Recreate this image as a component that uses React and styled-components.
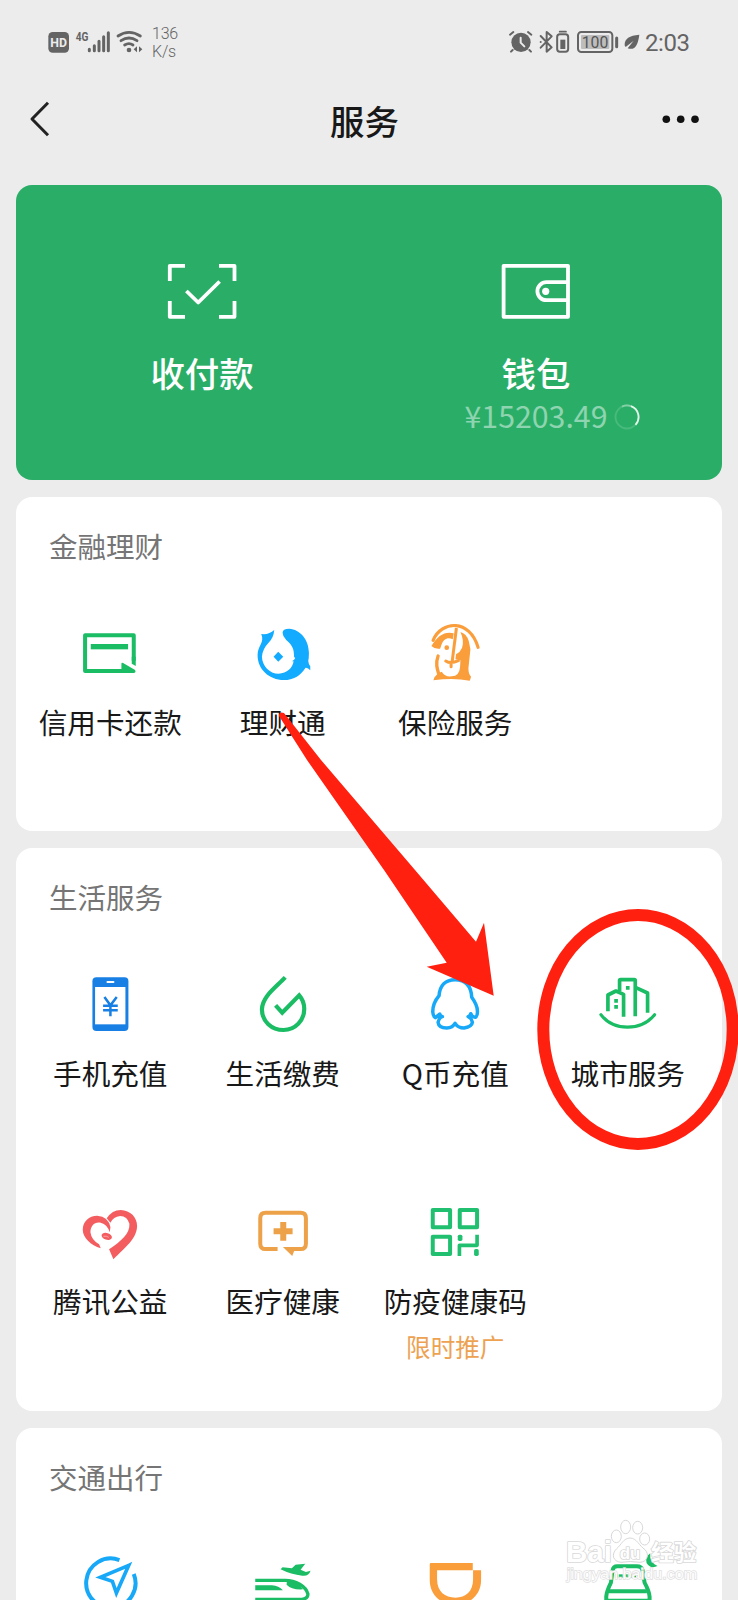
import React from "react";
import styled, { createGlobalStyle } from "styled-components";

const GlobalStyle = createGlobalStyle`
  *, *::before, *::after { box-sizing: border-box; }
  body {
    margin: 0;
    background: #ececec;
    font-family: "Noto Sans CJK SC", "Noto Sans", sans-serif;
  }
`;

const GREEN = "#1abc64";
const BLUE = "#18a8f8";
const ORANGE = "#fa9d3b";
const STATUS = "#646464";

const Screen = styled.div`
  position: relative;
  width: 738px;
  height: 1600px;
  overflow: hidden;
  background: #ececec;
  color: #181818;
`;

const StatusBar = styled.div`
  display: flex;
  align-items: center;
  height: 84px;
  padding: 0 48px;
  color: ${STATUS};
`;

const StatusIcon = styled.svg`
  display: block;
  flex: none;
  width: ${(p) => p.$w}px;
  height: 24px;
  margin-left: ${(p) => p.$gap || 0}px;
  overflow: visible;
`;

const NetSpeed = styled.div`
  margin: 2px 0 0 9px;
  font: 300 16px/18.5px Roboto, sans-serif;
  letter-spacing: -0.2px;
`;

const StatusRight = styled.div`
  display: flex;
  align-items: center;
  margin-left: auto;
`;

const Clock = styled.span`
  width: 45px;
  margin: 2px 0 0 5px;
  font: 400 24px/28px Roboto, sans-serif;
  letter-spacing: -0.4px;
  white-space: nowrap;
`;

const NavBar = styled.header`
  display: flex;
  align-items: center;
  justify-content: space-between;
  height: 69px;
  padding: 0 38px 0 29px;
`;

const NavIcon = styled.svg`
  display: block;
  width: ${(p) => p.$w}px;
  height: 36px;
`;

const PageTitle = styled.h1`
  margin: 2px 0 0 17px;
  font-size: 34.4px;
  line-height: 50px;
  font-weight: 500;
`;

const Cards = styled.main`
  display: flex;
  flex-direction: column;
  gap: 17px;
  padding: 32px 16px 0;
`;

const PayCard = styled.section`
  display: flex;
  height: 295px;
  padding: 66px 19px 0;
  border-radius: 16px;
  background: #2aae67;
  color: #fff;
`;

const PayItem = styled.div`
  flex: 1;
  display: flex;
  flex-direction: column;
  align-items: center;
`;

const PayIcon = styled.svg`
  display: block;
  width: 80px;
  height: 80px;
`;

const PayLabel = styled.div`
  margin-top: 15px;
  font-size: 34.4px;
  line-height: 52px;
  font-weight: 500;
`;

const BalanceRow = styled.div`
  display: flex;
  align-items: center;
  justify-content: center;
  height: 35px;
`;

const Balance = styled.span`
  flex: none;
  width: 140px;
  display: flex;
  justify-content: center;
  font-size: 30px;
  line-height: 35px;
  font-weight: 400;
  color: #8fd4b0;
  transform: scaleX(1.01);
`;

const Spinner = styled.svg`
  flex: none;
  width: 26px;
  height: 26px;
  margin: 3px -34px 0 8px;
`;

const Card = styled.section`
  padding: 29px 8px ${(p) => p.$bottom || 37}px;
  border-radius: 16px;
  background: #fff;
`;

const CardTitle = styled.h2`
  margin: 0 0 0 25px;
  font-size: 28.5px;
  line-height: 40px;
  font-weight: 400;
  color: #757575;
`;

const Grid = styled.div`
  display: grid;
  grid-template-columns: repeat(4, 1fr);
  grid-auto-rows: 228px;
`;

const Service = styled.div`
  display: flex;
  flex-direction: column;
  align-items: center;
  padding-top: 57px;
  white-space: nowrap;
`;

const ServiceIcon = styled.svg`
  display: block;
  flex: none;
  width: 60px;
  height: 60px;
  overflow: visible;
`;

const ServiceLabel = styled.div`
  margin-top: 19px;
  font-size: 28.6px;
  line-height: 40px;
`;

const Caption = styled.div`
  margin-top: 8px;
  font-size: 24.6px;
  line-height: 34px;
  color: #eda252;
`;

const Annotation = styled.svg`
  position: absolute;
  left: 0;
  top: 0;
  width: 738px;
  height: 1600px;
  pointer-events: none;
`;

const Watermark = styled.svg`
  position: absolute;
  left: 550px;
  top: 1510px;
  width: 160px;
  height: 90px;
  pointer-events: none;
`;

/* ---------- status bar icons ---------- */

const HdBadge = () => (
  <StatusIcon $w={21} viewBox="144 90 63 72">
    <rect x="145" y="96" width="62" height="62" rx="13" fill={STATUS} />
    <text x="176" y="142" textAnchor="middle" textLength="50" lengthAdjust="spacingAndGlyphs" fontFamily="Roboto" fontWeight="700" fontSize="41" fill="#ececec">HD</text>
  </StatusIcon>
);

const Signal = () => (
  <StatusIcon $w={34} $gap={7} viewBox="228 90 102 72">
    <text x="227" y="122" textLength="38" lengthAdjust="spacingAndGlyphs" fontFamily="Roboto" fontWeight="700" fontSize="39" fill={STATUS}>4G</text>
    <g stroke={STATUS} strokeWidth="9" strokeLinecap="round">
      <path d="M268 148V152M283 137V152M297 124V152M311 110V152M325 98V152" />
    </g>
  </StatusIcon>
);

const Wifi = () => (
  <StatusIcon $w={27} $gap={6} viewBox="348 90 81 72">
    <g fill="none" stroke={STATUS} strokeWidth="8.5" strokeLinecap="round">
      <path d="M354 108Q387 86 421 108M363 122Q387 106 411 122M374 135Q387 127 399 135" />
    </g>
    <circle cx="387" cy="150" r="7" fill={STATUS} />
    <path d="M401 148L411 139V157ZM427 148L417 139V157Z" fill={STATUS} />
  </StatusIcon>
);

const Alarm = () => (
  <StatusIcon $w={24} viewBox="27 30 72 72">
    <circle cx="63" cy="67" r="29" fill={STATUS} />
    <path d="M30 44L40 36M94 44L84 36M38 90L33 95M88 90L93 95" stroke={STATUS} strokeWidth="6" strokeLinecap="round" />
    <path d="M62 53V68L73 79" stroke="#ececec" strokeWidth="6" fill="none" strokeLinecap="round" />
  </StatusIcon>
);

const Bluetooth = () => (
  <StatusIcon $w={14} $gap={6} viewBox="117 30 42 72">
    <path d="M122 48L155 82L140 95V36L155 49L122 83" fill="none" stroke={STATUS} strokeWidth="6" strokeLinejoin="round" strokeLinecap="round" />
    <circle cx="122" cy="66" r="3" fill={STATUS} />
  </StatusIcon>
);

const DeviceBattery = () => (
  <StatusIcon $w={13} $gap={3} viewBox="168 30 39 72">
    <path d="M179 35H198" stroke={STATUS} strokeWidth="5" strokeLinecap="round" />
    <rect x="171.500" y="43" width="33" height="52" rx="8" fill="none" stroke={STATUS} strokeWidth="6" />
    <rect x="181" y="59" width="15" height="28" fill={STATUS} />
  </StatusIcon>
);

const Battery = () => (
  <StatusIcon $w={42} $gap={8} viewBox="231 30 126 72">
    <rect x="234" y="36" width="103" height="60" rx="10" fill="none" stroke={STATUS} strokeWidth="6" />
    <rect x="243" y="45" width="85" height="42" rx="3" fill="#bdbdbd" />
    <path d="M350 54V80" stroke={STATUS} strokeWidth="9" strokeLinecap="round" />
    <text x="285" y="83" textAnchor="middle" textLength="80" lengthAdjust="spacingAndGlyphs" fontFamily="Roboto" fontSize="50" fill="#555">100</text>
  </StatusIcon>
);

const Leaf = () => (
  <StatusIcon $w={16} $gap={5} viewBox="372 30 48 72">
    <path d="M418 44C388 46 374 56 374 74C374 78 376 80 378 80L401 62L383 85C406 92 414 74 418 44Z" fill={STATUS} />
  </StatusIcon>
);

/* ---------- service icons ---------- */

const CreditCard = () => (
  <ServiceIcon viewBox="150.75 369 180 180">
    <path d="M312 482V406H166V513H280" fill="none" stroke={GREEN} strokeWidth="12" strokeLinejoin="round" />
    <path d="M306 470H318V498L306 491Z" fill={GREEN} />
    <rect x="183" y="432" width="112" height="16" fill={GREEN} />
    <path d="M275 519V491Q275 486 280 489L316 510Q320 519 311 519Z" fill={GREEN} />
  </ServiceIcon>
);

const Fish = () => (
  <ServiceIcon viewBox="668.25 369 180 180">
    <path d="M693 402Q716 405 732 390Q730 414 715 428Q697 446 695 470C696 498 718 521 745 521C770 521 788 503 790 484L785 484Q793 480 795 474Q790 472 791 462C791 444 782 432 768 420Q757 409 757 398Q757 386 777 386C809 388 836 418 836 459Q836 475 834 482Q835 494 840 499V511Q833 502 826 503C811 527 789 540 761 540C716 540 682 508 682 465C682 437 704 428 693 402Z" fill="#12abff" />
    <path d="M744 455L759 470L744 485L730 470Z" fill="#12abff" />
  </ServiceIcon>
);

const Penguin = () => (
  <ServiceIcon viewBox="1185.75 369 180 180">
    <g fill="none" stroke={ORANGE}>
      <path d="M1210 421C1236 361 1320 356 1345 442" strokeWidth="9.500" strokeLinecap="round" />
      <path d="M1280 384L1267 487" strokeWidth="9" />
      <path d="M1225 468C1217 490 1222 506 1227 522" strokeWidth="10" strokeLinecap="round" />
      <path d="M1248 483Q1263 493 1286 482M1264 487V500" strokeWidth="9" strokeLinecap="round" />
    </g>
    <path d="M1205 438C1224 406 1246 393 1272 400L1269 418C1253 409 1241 419 1236 432L1231 446Q1215 448 1205 438Z" fill={ORANGE} />
    <circle cx="1251" cy="443" r="7" fill={ORANGE} />
    <path d="M1292 396Q1310 401 1317 423L1322 448L1316 505Q1316 524 1324 530L1320 542Q1270 532 1211 541L1214 532L1225 520L1236 515Q1246 532 1266 529Q1289 528 1291 500L1292 481L1277 478L1279 463Q1291 457 1297 443Q1304 422 1292 396Z" fill={ORANGE} />
  </ServiceIcon>
);

const Phone = () => (
  <ServiceIcon viewBox="150.75 312 180 180">
    <rect x="188" y="322" width="108" height="161" rx="12" fill="#1880e4" />
    <rect x="196" y="351" width="91" height="112" fill="#fff" />
    <path d="M233 336H251" stroke="#fff" strokeWidth="6" strokeLinecap="round" />
    <path d="M224 381L242 406L261 381M242 406V439M220 407H264M220 421H264" fill="none" stroke="#1880e4" strokeWidth="7.500" />
  </ServiceIcon>
);

const Drop = () => (
  <ServiceIcon viewBox="668.25 312 180 180">
    <path d="M765 322C737 352 696 379 695 418C695 454 724 480 760 480C796 480 822 450 822 417Q822 393 807 376L756 428L736 406" fill="none" stroke={GREEN} strokeWidth="12.500" />
  </ServiceIcon>
);

const QqPenguin = () => (
  <ServiceIcon viewBox="1185.75 312 180 180">
    <path d="M1276 329C1246 329 1230 348 1228 377C1217 390 1209 407 1209 425Q1210 440 1217 443L1230 432Q1231 438 1238 440Q1227 443 1225 457Q1227 474 1251 474Q1269 474 1276 460Q1285 474 1303 474Q1326 471 1328 457Q1326 444 1315 440Q1321 438 1323 431Q1328 443 1337 442Q1344 437 1343 423Q1343 406 1326 382C1324 347 1307 329 1276 329Z" fill="none" stroke={BLUE} strokeWidth="10.500" strokeLinejoin="round" />
  </ServiceIcon>
);

const City = () => (
  <ServiceIcon viewBox="653.25 282 180 180">
    <g fill="none" stroke={GREEN} strokeWidth="11" strokeLinejoin="round">
      <path d="M730 410V343L707 333L683 345V394" />
      <path d="M718 333V301Q718 299 721 299H762Q765 299 765 302V409" />
      <path d="M767 323L802 339V398" />
      <path d="M662 404C700 454 783 454 823 404" strokeWidth="9.500" strokeLinecap="round" />
    </g>
    <path d="M702 357h11v11h-11zM702 375h11v11h-11zM737 318h11v11h-11z" fill={GREEN} />
  </ServiceIcon>
);

const Heart = () => (
  <ServiceIcon viewBox="150.75 36 180 180">
    <path d="M213 175C183 165 159 143 159 119C159 94 178 77 202 77Q237 80 242 112L240 127Q233 103 213 98C195 94 182 107 182 127Q185 150 208 163Z" fill="#f35d60" />
    <path d="M231 85Q247 60 273 60C302 61 322 82 322 108C321 147 287 171 251 208L238 178C275 152 301 131 299 101Q293 79 271 78Q251 80 242 98Z" fill="#f35d60" />
    <ellipse cx="231" cy="139" rx="16" ry="10" transform="rotate(18 231 139)" fill="#f35d60" />
    <path d="M221 139Q230 137 237 142" fill="none" stroke="#fbc4c5" strokeWidth="2" />
  </ServiceIcon>
);

const Medical = () => (
  <ServiceIcon viewBox="668.25 36 180 180">
    <path d="M742 177H706Q690 177 690 161V84Q690 68 706 68H811Q827 68 827 84V161Q827 177 811 177H790" fill="none" stroke="#eda24a" strokeWidth="12" />
    <path d="M758 171H796L786 198Z" fill="#eda24a" />
    <path d="M759 96V152M730 124H787" stroke="#eda24a" strokeWidth="18" />
  </ServiceIcon>
);

const HealthCode = () => (
  <ServiceIcon viewBox="1185.75 36 180 180">
    <g fill="none" stroke="#20c070" strokeWidth="12" strokeLinejoin="round">
      <path d="M1209 60H1261V112H1209ZM1290 60H1342V112H1290ZM1209 140H1261V192H1209Z" />
      <path d="M1289 198V166H1342V134" strokeWidth="11" />
    </g>
    <rect x="1284" y="134" width="14" height="19" rx="5" fill="#20c070" />
    <rect x="1333" y="177" width="14" height="21" rx="5" fill="#20c070" />
  </ServiceIcon>
);

const Compass = () => (
  <ServiceIcon viewBox="240.75 432 180 180">
    <path d="M359 450A74 74 0 1 0 402 492" fill="none" stroke={BLUE} strokeWidth="12" />
    <path d="M387 466L302 502L338 514L350 549Z" fill="none" stroke={BLUE} strokeWidth="11" strokeLinejoin="miter" />
  </ServiceIcon>
);

const Travel = () => (
  <ServiceIcon viewBox="758.25 432 180 180">
    <path d="M765 511H855C886 511 917 529 923 552Q923 566 905 568H765" fill="none" stroke={GREEN} strokeWidth="10" />
    <path d="M765 526H815Q836 528 848 541H765ZM860 514Q890 514 908 538Q874 540 859 524Z" fill={GREEN} />
    <path d="M841 478L847 472L875 475L886 464L915 461L901 479L917 486L931 482Q925 500 906 497Q873 494 841 478Z" fill={GREEN} />
  </ServiceIcon>
);

const RideHailing = () => (
  <ServiceIcon viewBox="135.75 432 180 180">
    <path d="M154 459H279V481H172V508C172 546 196 563 227 563C258 563 280 545 280 508V481H304V510C304 555 270 584 227 584C181 584 150 553 150 510V463Q150 459 154 459Z" fill={ORANGE} />
  </ServiceIcon>
);

const Taxi = () => (
  <ServiceIcon viewBox="653.25 432 180 180">
    <g fill="none" stroke={GREEN} strokeWidth="12">
      <path d="M678 590V560Q679 544 692 518L697 481Q699 469 711 469H770Q784 469 787 481L793 518Q807 544 808 560V590" />
      <path d="M686 544H800M680 572H806" />
    </g>
    <path d="M704 493H778V503H704Z" fill={GREEN} />
    <path d="M714 491V504M729 491V504M744 491V504M757 491V504M769 491V504" stroke="#fff" strokeWidth="3" />
    <path d="M810 430Q807 458 832 468Q810 478 799 459Q794 441 810 430Z" fill={GREEN} />
  </ServiceIcon>
);

const sections = [
  {
    title: "金融理财",
    items: [
      { label: "信用卡还款", Icon: CreditCard },
      { label: "理财通", Icon: Fish },
      { label: "保险服务", Icon: Penguin },
    ],
  },
  {
    title: "生活服务",
    bottom: 38,
    items: [
      { label: "手机充值", Icon: Phone },
      { label: "生活缴费", Icon: Drop },
      { label: "Q币充值", Icon: QqPenguin },
      { label: "城市服务", Icon: City },
      { label: "腾讯公益", Icon: Heart },
      { label: "医疗健康", Icon: Medical },
      { label: "防疫健康码", Icon: HealthCode, caption: "限时推广" },
    ],
  },
  {
    title: "交通出行",
    items: [{ Icon: Compass }, { Icon: Travel }, { Icon: RideHailing }, { Icon: Taxi }],
  },
];

export default function App() {
  return (
    <>
      <GlobalStyle />
      <Screen>
        <StatusBar>
          <HdBadge />
          <Signal />
          <Wifi />
          <NetSpeed>
            <div>136</div>
            <div>K/s</div>
          </NetSpeed>
          <StatusRight>
            <Alarm />
            <Bluetooth />
            <DeviceBattery />
            <Battery />
            <Leaf />
            <Clock>2:03</Clock>
          </StatusRight>
        </StatusBar>

        <NavBar>
          <NavIcon $w={22} viewBox="0 0 22 36">
            <path d="M19 1.800L3 18L19 34.200" fill="none" stroke="#222" strokeWidth="3" strokeLinejoin="round" />
          </NavIcon>
          <PageTitle>服务</PageTitle>
          <NavIcon $w={39} viewBox="0 0 39 36">
            <g fill="#111">
              <circle cx="5.300" cy="18.200" r="3.800" />
              <circle cx="19.700" cy="18.200" r="3.800" />
              <circle cx="34" cy="18.200" r="3.800" />
            </g>
          </NavIcon>
        </NavBar>

        <Cards>
          <PayCard>
            <PayItem>
              <PayIcon viewBox="0 0 80 80">
                <g fill="none" stroke="#fff" strokeWidth="3.800" strokeLinejoin="round">
                  <path d="M23 14.800H7.800V30M57 14.800H72.500V30M23 65.800H7.800V50M57 65.800H72.500V50" />
                  <path d="M24.400 40L36.200 51.500L57.600 30.500" />
                </g>
              </PayIcon>
              <PayLabel>收付款</PayLabel>
            </PayItem>
            <PayItem>
              <PayIcon viewBox="0 0 80 80">
                <g fill="none" stroke="#fff" strokeWidth="3.800" strokeLinejoin="round">
                  <rect x="7.600" y="14.800" width="64.400" height="51" />
                  <path d="M72 31.200H50.400A9 9 0 0 0 50.400 49.200H72" />
                </g>
                <circle cx="49.700" cy="40.300" r="3.600" fill="#fff" />
              </PayIcon>
              <PayLabel>钱包</PayLabel>
              <BalanceRow>
                <Balance>¥15203.49</Balance>
                <Spinner viewBox="0 0 26 26" fill="none" strokeWidth="1.800">
                  <circle cx="13" cy="13" r="11.500" stroke="#48ba7d" />
                  <path d="M8 2.600A11.500 11.500 0 0 1 17 2.200" stroke="#86d0a8" />
                  <path d="M17 2.200A11.500 11.500 0 0 1 21.500 20.800" stroke="#e4f6ec" />
                </Spinner>
              </BalanceRow>
            </PayItem>
          </PayCard>

          {sections.map(({ title, items, bottom }) => (
            <Card key={title} $bottom={bottom}>
              <CardTitle>{title}</CardTitle>
              <Grid>
                {items.map(({ label, Icon, caption }, i) => (
                  <Service key={i}>
                    <Icon />
                    {label && <ServiceLabel>{label}</ServiceLabel>}
                    {caption && <Caption>{caption}</Caption>}
                  </Service>
                ))}
              </Grid>
            </Card>
          ))}
        </Cards>

        <Annotation viewBox="0 0 738 1600">
          <path d="M279 716Q279 711 284 713L321 760L415 870L476 941.700L484 922.700L493.700 995.700L426.700 966.700L446.700 962.700L384 870L307 760Z" fill="#ff2010" />
          <ellipse cx="638" cy="1029.500" rx="94.700" ry="114.500" fill="none" stroke="#ff2010" strokeWidth="12" />
        </Annotation>

        <Watermark viewBox="0 0 480 270">
          <g fill="#fff" stroke="#d8d8d8" strokeWidth="3">
            <ellipse cx="199" cy="79" rx="15" ry="19" />
            <ellipse cx="227" cy="51" rx="15" ry="20" />
            <ellipse cx="263" cy="53" rx="15" ry="19" />
            <ellipse cx="284" cy="87" rx="15" ry="18" />
            <path d="M240 84C260 84 268 108 285 119C300 135 290 156 270 157Q240 152 213 157C188 154 183 133 200 116C215 103 220 85 240 84Z" />
          </g>
          <g fill="#fff" stroke="#d8d8d8" strokeWidth="5" strokeLinejoin="round" paintOrder="stroke" fontFamily="Liberation Sans" fontWeight="700">
            <text x="48" y="155" fontSize="90" textLength="138" lengthAdjust="spacingAndGlyphs">Bai</text>
            <text x="209" y="146" fontSize="50" textLength="62" lengthAdjust="spacingAndGlyphs">du</text>
            <text x="303" y="149" fontSize="66" textLength="136" lengthAdjust="spacingAndGlyphs" fontFamily="Noto Sans CJK SC">经验</text>
          </g>
          <text x="50" y="206" fontSize="46" textLength="392" lengthAdjust="spacingAndGlyphs" fontFamily="Liberation Sans" fill="#fff" fillOpacity="0.9" stroke="#e0e0e0" strokeWidth="4" paintOrder="stroke">jingyan.baidu.com</text>
        </Watermark>
      </Screen>
    </>
  );
}
